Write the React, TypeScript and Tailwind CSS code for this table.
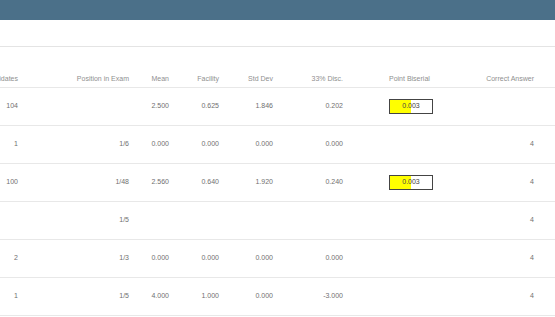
import React from "react";

type Row = {
  candidates: string;
  position: string;
  mean: string;
  facility: string;
  stdDev: string;
  disc: string;
  biserial?: { value: string; fill: number };
  answer: string;
};

const rows: Row[] = [
  { candidates: "104", position: "", mean: "2.500", facility: "0.625", stdDev: "1.846", disc: "0.202", biserial: { value: "0.003", fill: 51 }, answer: "" },
  { candidates: "1", position: "1/6", mean: "0.000", facility: "0.000", stdDev: "0.000", disc: "0.000", answer: "4" },
  { candidates: "100", position: "1/48", mean: "2.560", facility: "0.640", stdDev: "1.920", disc: "0.240", biserial: { value: "0.003", fill: 51 }, answer: "4" },
  { candidates: "", position: "1/5", mean: "", facility: "", stdDev: "", disc: "", answer: "4" },
  { candidates: "2", position: "1/3", mean: "0.000", facility: "0.000", stdDev: "0.000", disc: "0.000", answer: "4" },
  { candidates: "1", position: "1/5", mean: "4.000", facility: "1.000", stdDev: "0.000", disc: "-3.000", answer: "4" },
];

const Cell = ({ w, children }: { w: string; children?: React.ReactNode }) => (
  <div className={`flex shrink-0 justify-end whitespace-nowrap ${w}`}>{children}</div>
);

const BiserialBox = ({ value, fill }: { value: string; fill: number }) => (
  <div className="relative h-[15px] w-[44px] border border-[#444] bg-white">
    <div className="h-full bg-[#ffff00]" style={{ width: `${fill}%` }} />
    <span className="absolute inset-0 flex items-center justify-center text-[7px] text-[#444]">{value}</span>
  </div>
);

export default function App() {
  return (
    <div className="h-[317px] w-[555px] overflow-hidden bg-white font-['Liberation_Sans',Arial,sans-serif]">
      <div className="h-[20px] bg-[#4b7089]" />
      <div className="h-[27px] border-b border-[#e4e4e4]" />

      <div className="flex h-[41px] items-end border-b border-[#e8e8e8] pb-[3px] text-[7px] text-[#8f8f8f]">
        <Cell w="w-[18px]">Candidates</Cell>
        <Cell w="w-[111px]">Position in Exam</Cell>
        <Cell w="w-[40px]">Mean</Cell>
        <Cell w="w-[50px]">Facility</Cell>
        <Cell w="w-[54px]">Std Dev</Cell>
        <Cell w="w-[70px]">33% Disc.</Cell>
        <div className="w-[89px] shrink-0 pl-[46px] whitespace-nowrap">Point Biserial</div>
        <Cell w="w-[102px]">Correct Answer</Cell>
      </div>

      {rows.map((r, i) => (
        <div key={i} className="flex h-[38px] items-center border-b border-[#e8e8e8] text-[7px] text-[#707070]">
          <Cell w="w-[18px]">{r.candidates}</Cell>
          <Cell w="w-[111px]">{r.position}</Cell>
          <Cell w="w-[40px]">{r.mean}</Cell>
          <Cell w="w-[50px]">{r.facility}</Cell>
          <Cell w="w-[54px]">{r.stdDev}</Cell>
          <Cell w="w-[70px]">{r.disc}</Cell>
          <div className="w-[89px] shrink-0 pl-[46px]">
            {r.biserial && <BiserialBox value={r.biserial.value} fill={r.biserial.fill} />}
          </div>
          <Cell w="w-[102px]">{r.answer}</Cell>
        </div>
      ))}
    </div>
  );
}
